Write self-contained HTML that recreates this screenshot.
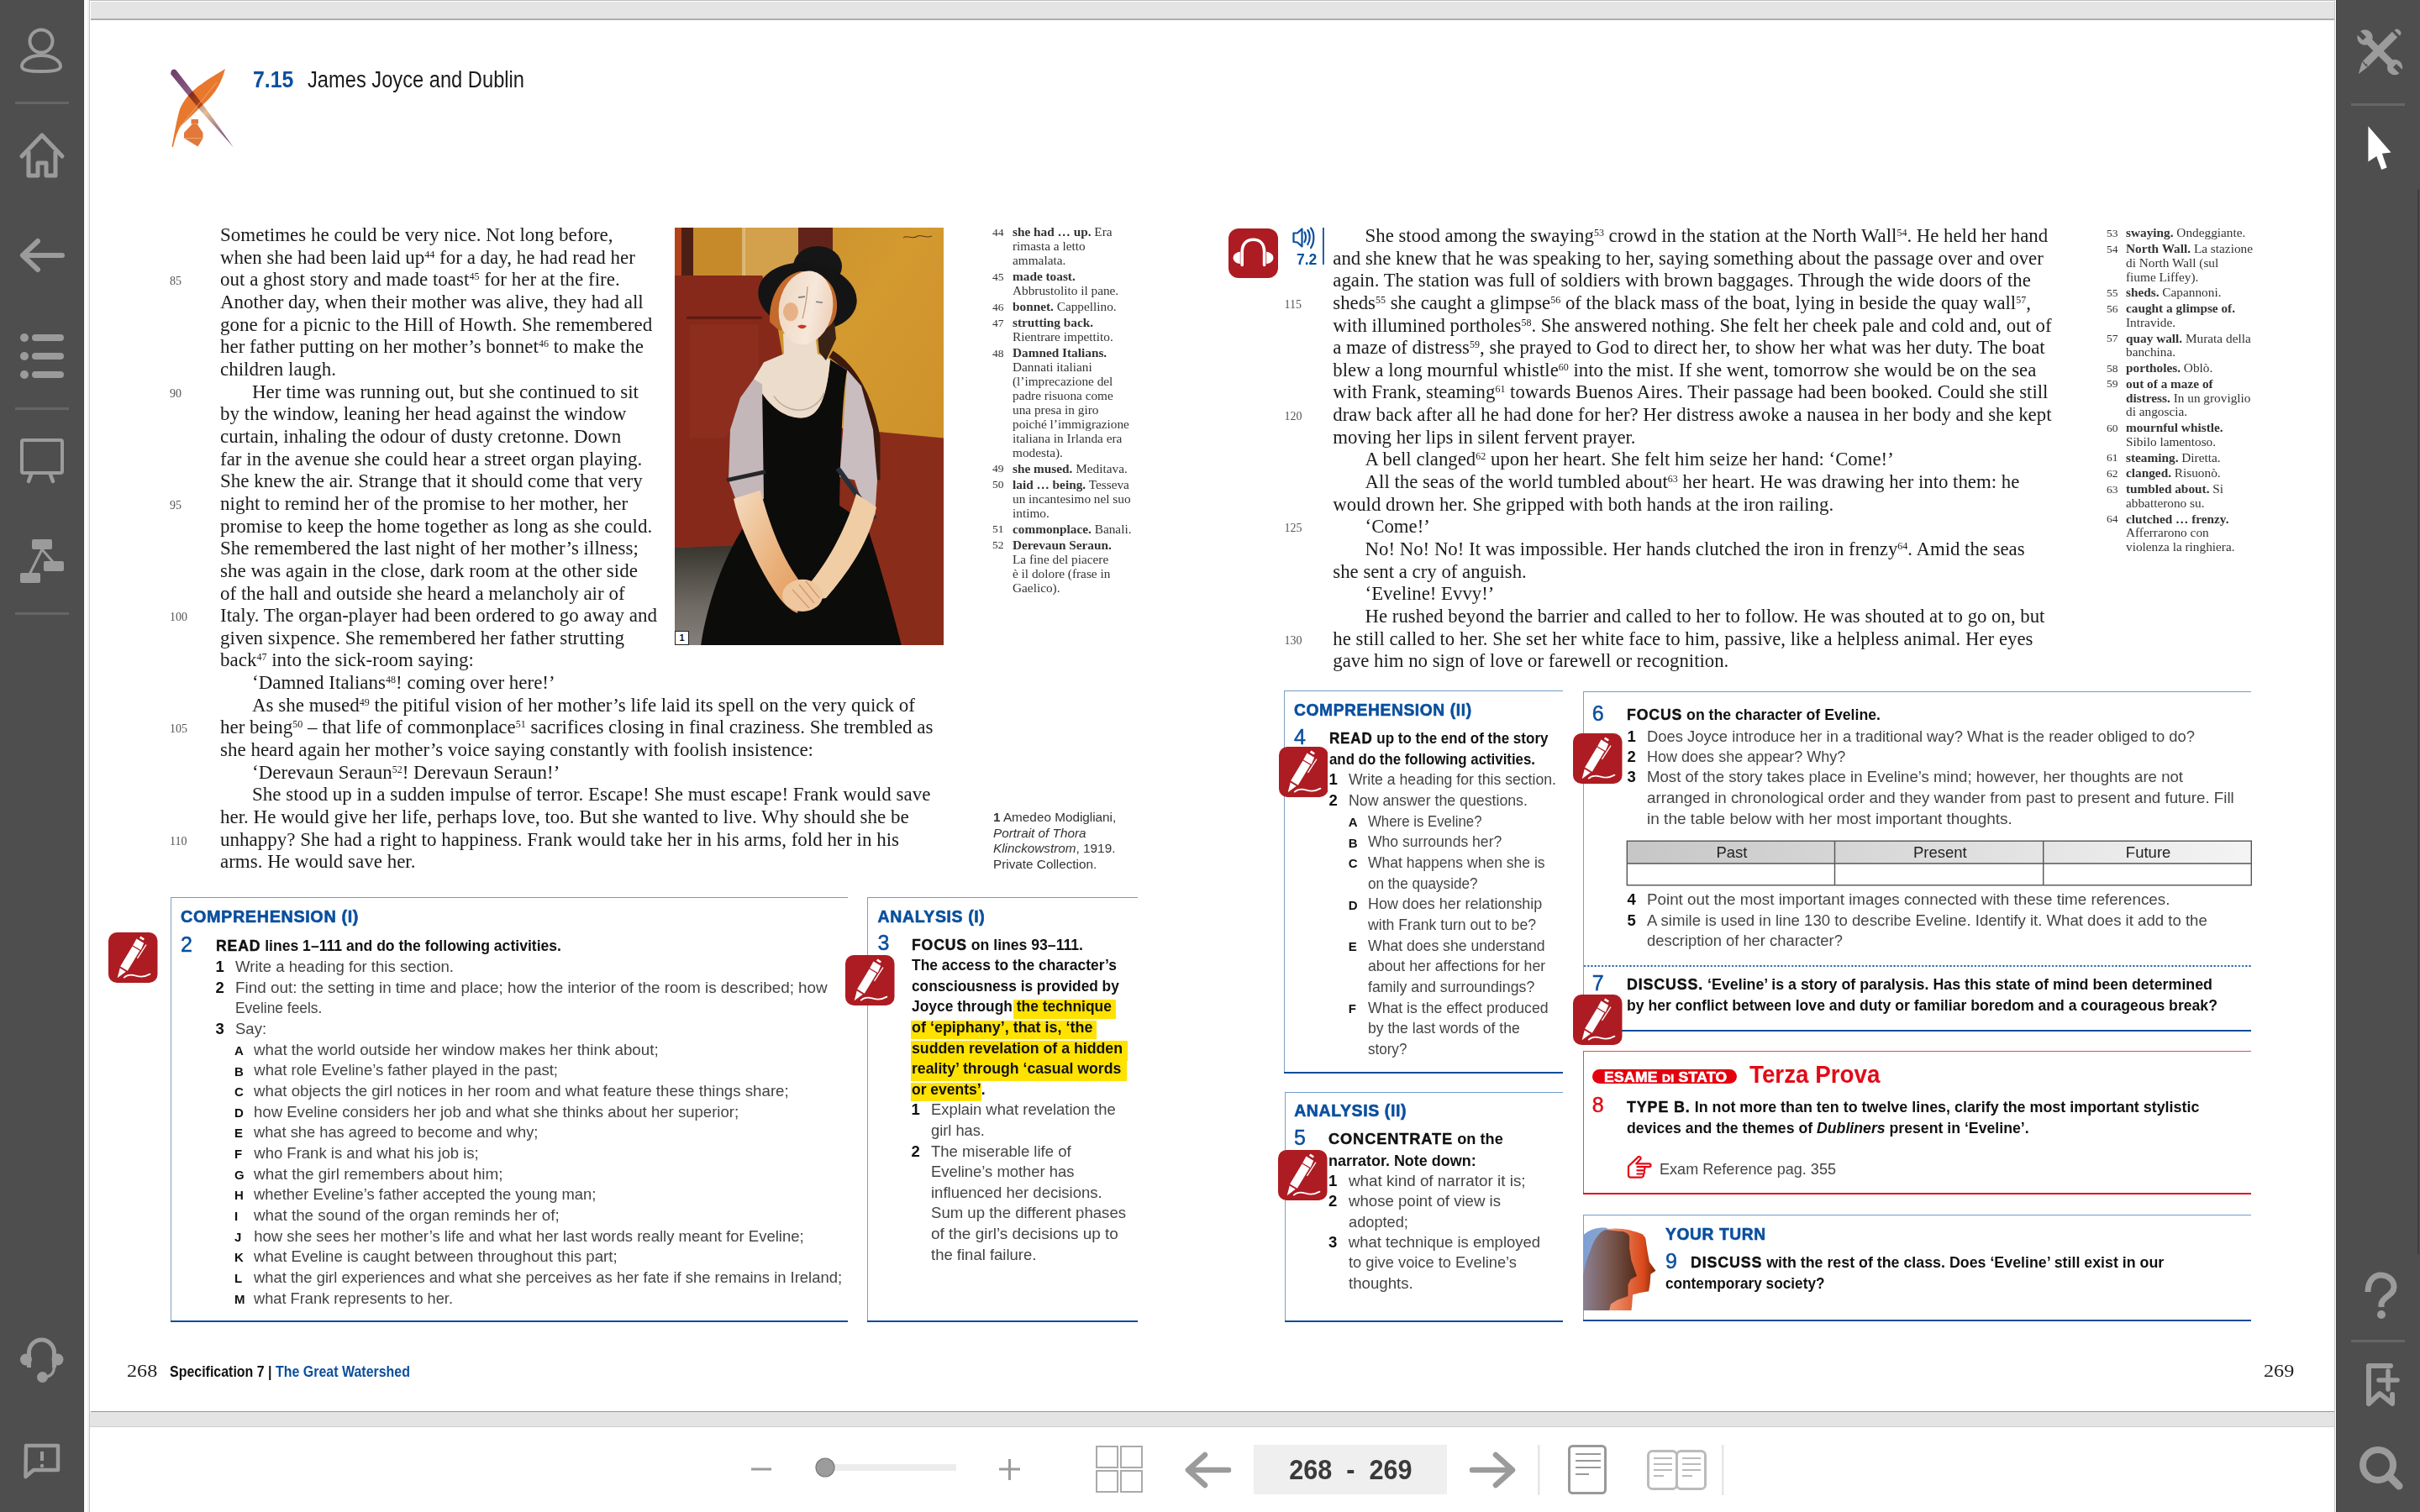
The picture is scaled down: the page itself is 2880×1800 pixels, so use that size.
<!DOCTYPE html>
<html><head><meta charset="utf-8"><title>Eveline</title><style>
*{margin:0;padding:0}
html,body{width:2880px;height:1800px;overflow:hidden;background:#fff}
.t{position:absolute;white-space:pre;line-height:0}
.sp{font-size:12px;position:relative;top:-7px}
.k{font-weight:bold;letter-spacing:0.9px;-webkit-text-stroke:0.45px currentColor}
</style></head><body>
<div style="position:absolute;left:0;top:0;width:100px;height:1800px;background:#4e4e4e"></div>
<div style="position:absolute;left:99px;top:0;width:1px;height:1800px;background:#454545"></div>
<div style="position:absolute;left:100px;top:0;width:6px;height:1800px;background:linear-gradient(90deg,#f3f3f3,#fff 40%,#ececec)"></div>
<div style="position:absolute;left:106px;top:0;width:1px;height:1800px;background:#c6c6c6"></div>
<div style="position:absolute;left:2778px;top:0;width:1px;height:1800px;background:#c8c8c8"></div>
<div style="position:absolute;left:2780px;top:0;width:100px;height:1800px;background:#4e4e4e"></div>
<div style="position:absolute;left:2780px;top:0;width:1px;height:1800px;background:#3e3e3e"></div>
<div style="position:absolute;left:2877px;top:226px;width:2px;height:1267px;background:#3d3d3d"></div>
<div style="position:absolute;left:107px;top:0;width:2671px;height:1px;background:#bfbfbf"></div>
<div style="position:absolute;left:108px;top:2px;width:2670px;height:20.5px;background:#e4e4e4"></div>
<div style="position:absolute;left:108px;top:22px;width:2670px;height:2px;background:linear-gradient(#b5b5b5,#a6a6a6)"></div>
<div style="position:absolute;left:108px;top:1679.5px;width:2670px;height:3px;background:linear-gradient(#8a8a8a,#b0b0b0 60%,#d8d8d8)"></div>
<div style="position:absolute;left:107px;top:1681px;width:2671px;height:17px;background:#e4e4e4"></div>
<div style="position:absolute;left:107px;top:1698px;width:2671px;height:1px;background:#cfcfcf"></div>
<div style="position:absolute;left:18px;top:120.5px;width:64px;height:3px;background:#666"></div>
<div style="position:absolute;left:18px;top:484.5px;width:64px;height:3px;background:#666"></div>
<div style="position:absolute;left:18px;top:728.5px;width:64px;height:3px;background:#666"></div>
<div style="position:absolute;left:2798px;top:122.5px;width:64px;height:3px;background:#666"></div>
<div style="position:absolute;left:2798px;top:1594.5px;width:64px;height:3px;background:#666"></div>
<svg style="position:absolute;left:0;top:0" width="2880" height="1800" viewBox="0 0 2880 1800"><circle cx="49" cy="49" r="13.5" fill="none" stroke="#9b9b9b" stroke-width="4"/><path d="M49 66 C33 66 26 74 26 79 C26 84 36 85 49 85 C62 85 72 84 72 79 C72 74 65 66 49 66 Z" fill="none" stroke="#9b9b9b" stroke-width="4"/><path d="M26 186 L50 161 L74 186" fill="none" stroke="#9b9b9b" stroke-width="5" stroke-linecap="round" stroke-linejoin="round"/><path d="M34 180 V209 H45 V194 H55 V209 H66 V180" fill="none" stroke="#9b9b9b" stroke-width="5" stroke-linejoin="round"/><path d="M74 304 H28 M45 287 L27 304 L45 321" fill="none" stroke="#9b9b9b" stroke-width="6" stroke-linecap="round" stroke-linejoin="round"/><circle cx="29" cy="402" r="5" fill="#9b9b9b"/><rect x="38" y="398" width="38" height="8" rx="4" fill="#9b9b9b"/><circle cx="29" cy="424" r="5" fill="#9b9b9b"/><rect x="38" y="420" width="38" height="8" rx="4" fill="#9b9b9b"/><circle cx="29" cy="446" r="5" fill="#9b9b9b"/><rect x="38" y="442" width="38" height="8" rx="4" fill="#9b9b9b"/><rect x="26" y="524" width="48" height="39" rx="2" fill="none" stroke="#9b9b9b" stroke-width="4"/><path d="M37 565 L34 573 M60 565 L63 573" stroke="#9b9b9b" stroke-width="4.5" stroke-linecap="round"/><rect x="38" y="642" width="24" height="12" rx="2" fill="#9b9b9b"/><rect x="52" y="668" width="24" height="12" rx="2" fill="#9b9b9b"/><rect x="24" y="682" width="24" height="12" rx="2" fill="#9b9b9b"/><path d="M50 654 L35 684 M50 654 L64 670" stroke="#9b9b9b" stroke-width="3"/><path d="M34.5 1628 V1610 A15 15 0 0 1 64.5 1610 V1628" fill="none" stroke="#9b9b9b" stroke-width="5"/><circle cx="31" cy="1618.5" r="7" fill="#9b9b9b"/><circle cx="68.5" cy="1618.5" r="7" fill="#9b9b9b"/><path d="M64.5 1626 C64.5 1636 60 1639 52 1639.5" fill="none" stroke="#9b9b9b" stroke-width="3.5"/><circle cx="50.5" cy="1639.5" r="6.5" fill="#9b9b9b"/><path d="M31 1721 H69 V1750 H40 L30.5 1758 Z" fill="none" stroke="#9b9b9b" stroke-width="4.5" stroke-linejoin="round"/><path d="M50 1728 V1739" stroke="#9b9b9b" stroke-width="4"/><circle cx="50" cy="1745" r="2.2" fill="#9b9b9b"/><path d="M2816 46 L2849 79" stroke="#9b9b9b" stroke-width="8.5"/><circle cx="2814.5" cy="44.5" r="9.2" fill="#9b9b9b"/><circle cx="2850" cy="80" r="9.2" fill="#9b9b9b"/><path d="M2802 38 L2812 48 L2816 44 L2806 34 Z" fill="#4e4e4e"/><path d="M2862 86 L2852 76 L2848 80 L2858 90 Z" fill="#4e4e4e"/><path d="M2815 76 L2850 41" stroke="#9b9b9b" stroke-width="9" stroke-linecap="butt"/><path d="M2849.5 36 L2856 42.5 A4.6 4.6 0 0 0 2849.5 36 Z" fill="#9b9b9b"/><path d="M2850 41.5 L2851 40.5" stroke="#4e4e4e" stroke-width="1"/><path d="M2811 73.5 L2817.5 80 L2806.8 88 Z" fill="#9b9b9b"/><path d="M2812.5 74 L2815.5 78 L2817 76" fill="none" stroke="#4e4e4e" stroke-width="1.2"/><path d="M2818.4 150.3 L2845.5 181.4 L2834.9 182.7 L2840.6 199.4 L2834.2 202 L2828.3 186 L2818.4 192.5 Z" fill="#fff"/><path d="M2818 1538 C2818 1524 2826 1518 2833 1518 C2842 1518 2849 1524 2849 1532 C2849 1542 2836 1543 2834 1552 V1556" fill="none" stroke="#9b9b9b" stroke-width="7"/><circle cx="2834" cy="1565" r="5" fill="#9b9b9b"/><path d="M2819 1671 V1626 H2845 M2819 1671 L2832 1659 L2847 1671 V1660" fill="none" stroke="#9b9b9b" stroke-width="6" stroke-linejoin="round" stroke-linecap="round"/><path d="M2842 1632 V1654 M2831 1643 H2853" stroke="#9b9b9b" stroke-width="5.5" stroke-linecap="round"/><circle cx="2830" cy="1744" r="18" fill="none" stroke="#9b9b9b" stroke-width="8"/><path d="M2843 1757 L2855 1769" stroke="#9b9b9b" stroke-width="9" stroke-linecap="round"/><path d="M894 1749 H918" stroke="#9b9b9b" stroke-width="3"/><rect x="982" y="1743" width="156" height="8" fill="#ececec"/><circle cx="982" cy="1747" r="11" fill="#9c9c9c" stroke="#7a7a7a" stroke-width="1.2"/><path d="M1189 1749 H1214 M1201.5 1737 V1762" stroke="#9b9b9b" stroke-width="3"/><rect x="1305" y="1722" width="25" height="25" fill="none" stroke="#aaa" stroke-width="2"/><rect x="1334" y="1722" width="25" height="25" fill="none" stroke="#aaa" stroke-width="2"/><rect x="1305" y="1751" width="25" height="25" fill="none" stroke="#aaa" stroke-width="2"/><rect x="1334" y="1751" width="25" height="25" fill="none" stroke="#aaa" stroke-width="2"/><path d="M1462 1750 H1416 M1434 1732 L1414 1750 L1434 1768" fill="none" stroke="#9b9b9b" stroke-width="6.5" stroke-linecap="round" stroke-linejoin="round"/><rect x="1492" y="1720" width="230" height="59" fill="#efefef"/><path d="M1752 1750 H1798 M1780 1732 L1800 1750 L1780 1768" fill="none" stroke="#9b9b9b" stroke-width="6.5" stroke-linecap="round" stroke-linejoin="round"/><rect x="1830" y="1720" width="2.5" height="60" fill="#e6e6e6"/><rect x="2049" y="1720" width="2.5" height="60" fill="#e6e6e6"/><rect x="1867.5" y="1721.5" width="43" height="56" rx="4" fill="none" stroke="#999" stroke-width="3"/><rect x="1875" y="1730" width="30" height="2" fill="#999"/><rect x="1875" y="1738" width="30" height="2" fill="#999"/><rect x="1875" y="1746" width="30" height="2" fill="#999"/><rect x="1875" y="1754" width="16" height="2" fill="#999"/><rect x="1961.5" y="1727.5" width="34" height="45" rx="5" fill="none" stroke="#bbb" stroke-width="3"/><rect x="1995.5" y="1727.5" width="34" height="45" rx="5" fill="none" stroke="#bbb" stroke-width="3"/><rect x="1968" y="1735" width="22" height="2" fill="#bbb"/><rect x="2002" y="1735" width="22" height="2" fill="#bbb"/><rect x="1968" y="1742" width="22" height="2" fill="#bbb"/><rect x="2002" y="1742" width="22" height="2" fill="#bbb"/><rect x="1968" y="1749" width="22" height="2" fill="#bbb"/><rect x="2002" y="1749" width="22" height="2" fill="#bbb"/><rect x="1968" y="1756" width="12" height="2" fill="#bbb"/><rect x="2002" y="1756" width="12" height="2" fill="#bbb"/></svg>
<div style="position:absolute;left:1492px;top:1720px;width:230px;height:59px;line-height:59px;text-align:center;font-family:'Liberation Sans',sans-serif;font-weight:bold;font-size:34px;color:#3a3a3a;white-space:pre"><span style="display:inline-block;transform:scaleX(0.9)">268  -  269</span></div>
<svg style="position:absolute;left:195px;top:75px" width="90" height="110" viewBox="195 75 90 110"><defs><linearGradient id="pur" gradientUnits="userSpaceOnUse" x1="205" y1="84" x2="277" y2="175"><stop offset="0" stop-color="#6e3f6c"/><stop offset="0.3" stop-color="#8a5a84"/><stop offset="0.55" stop-color="#e3c095"/><stop offset="0.8" stop-color="#9a6a88"/><stop offset="1" stop-color="#6e3f6c"/></linearGradient></defs><path d="M203.4 88.5 C202.5 84 206 81 209.6 83.5 L244.5 128.4 L277.6 175 L239.3 132.4 Z" fill="url(#pur)"/><path d="M268 82 C262 86 250 92 240 100 C228 108 219 118 214 130 C211 140 208 156 204.5 175 L206 175 C209 162 212 155 215 150 C224 142 232 134 240 126 C252 116 262 104 268 82 Z" fill="#e8782e" style="mix-blend-mode:multiply"/><path d="M258 98 L215 150" stroke="#f6b080" stroke-width="0.8"/><path d="M227.5 142 H236 V147.5 H227.5 Z" fill="#e2783a"/><path d="M229 147.5 H234.5 L241.5 158 V164.5 L235.5 174.5 L219 164.5 V158 Z" fill="#e2783a"/><path d="M219 164.5 L241.5 164.5" stroke="#f3b080" stroke-width="0.8"/></svg>
<svg style="position:absolute;left:803px;top:271px" width="320" height="497" viewBox="0 0 320 496" preserveAspectRatio="none"><defs><linearGradient id="och" x1="0" y1="0" x2="1" y2="1"><stop offset="0" stop-color="#c4862a"/><stop offset="0.45" stop-color="#d39a30"/><stop offset="1" stop-color="#c98a26"/></linearGradient><linearGradient id="chair" x1="0" y1="0" x2="0" y2="1"><stop offset="0" stop-color="#38352f"/><stop offset="0.6" stop-color="#6f6a64"/><stop offset="1" stop-color="#85807a"/></linearGradient><linearGradient id="arm" x1="0" y1="0" x2="1" y2="1"><stop offset="0" stop-color="#f4dcc0"/><stop offset="0.6" stop-color="#eab07a"/><stop offset="1" stop-color="#e29a5c"/></linearGradient><linearGradient id="face" x1="0" y1="0" x2="1" y2="0"><stop offset="0" stop-color="#efd8c4"/><stop offset="0.6" stop-color="#f6e8da"/><stop offset="1" stop-color="#eed2bc"/></linearGradient></defs><rect width="320" height="496" fill="url(#och)"/><rect x="0" y="0" width="8" height="496" fill="#b2421c"/><rect x="8" y="0" width="14" height="60" fill="#4c1f14"/><rect x="22" y="0" width="125" height="57" fill="#c68a2a"/><rect x="83" y="0" width="64" height="57" fill="#d3a04c"/><rect x="80" y="0" width="4" height="57" fill="#e6c890" opacity="0.7"/><rect x="147" y="0" width="41" height="52" fill="#62241a"/><path d="M8 57 L104 57 L112 75 L121 110 L128 150 L120 180 L112 260 L100 380 L0 380 L0 57 Z" fill="#86291b"/><path d="M14 107 L104 107" stroke="#5e1a12" stroke-width="3"/><path d="M18 115 L100 115 L100 200 L60 250 L18 250 Z" fill="#93321f" opacity="0.5"/><path d="M196 238 L320 250 L320 496 L196 496 Z" fill="#8a2c1a"/><path d="M0 380 L76 378 L52 440 L40 497 L0 497 Z" fill="url(#chair)"/><path d="M186 150 C210 165 232 200 240 250 L240 300" fill="none" stroke="#3d1a0e" stroke-width="9"/><path d="M94 180 C110 212 130 226 150 226 C168 226 180 212 185 157 L205 169 C200 200 198 240 196 330 L228 352 C244 400 258 450 270 497 L31 497 C38 450 55 400 78 362 L100 330 C104 290 102 240 94 180 Z" fill="#0c0c0b"/><path d="M129 126 L167 126 L170 150 L185 157 C180 212 168 226 150 226 C130 226 110 212 94 180 L106 160 L130 150 Z" fill="#ecdccc"/><path d="M118 200 C132 222 166 224 178 196" fill="none" stroke="#bfae9e" stroke-width="1.5"/><path d="M94 180 L104 186 L106 322 L76 332 L64 300 L66 240 L78 202 Z" fill="#c4b7ba"/><path d="M62 300 L108 290" stroke="#26262a" stroke-width="5"/><path d="M185 157 L206 170 L222 188 L236 240 L241 300 L238 346 L228 342 L214 300 L196 296 L200 244 L205 169 Z" fill="#c9bdc0"/><path d="M194 286 L238 346" stroke="#263038" stroke-width="6"/><path d="M70 322 L102 312 C112 350 128 395 152 424 L146 458 C130 452 116 430 100 400 C88 375 76 350 70 322 Z" fill="url(#arm)"/><path d="M216 316 L240 332 C232 372 208 408 180 440 L150 444 L158 426 C182 398 204 358 216 316 Z" fill="#f0cda4"/><ellipse cx="152" cy="437" rx="24" ry="19" fill="#efc79e"/><path d="M140 430 L160 452 M148 424 L166 446 M156 420 L172 440" stroke="#d0906a" stroke-width="1.2"/><ellipse cx="170" cy="46" rx="29" ry="24" fill="#161616"/><ellipse cx="158" cy="82" rx="59" ry="40" transform="rotate(8 158 82)" fill="#141414"/><path d="M113 112 C112 80 128 56 150 52 C172 50 192 64 193 90 C194 108 186 118 176 122 L124 122 Z" fill="#c36a2c"/><path d="M170 128 L190 112 L192 132 L180 158 L172 148 Z" fill="#3a2216"/><ellipse cx="156" cy="95" rx="32" ry="44" transform="rotate(10 156 95)" fill="url(#face)"/><ellipse cx="138" cy="100" rx="9" ry="11" fill="#e0925a" opacity="0.6"/><path d="M147 83 L155 82 M168 88 L176 89" stroke="#7a7a80" stroke-width="1.6"/><path d="M158 70 C157 90 154 100 152 108" fill="none" stroke="#c89a80" stroke-width="1.3"/><path d="M146 117 C149 115 154 115 157 117 C154 121 149 121 146 117 Z" fill="#c8382a"/><path d="M272 12 C277 8 282 15 289 10 C294 8 298 13 306 10" stroke="#5a3a18" stroke-width="1" fill="none"/></svg><div style="position:absolute;left:803px;top:751px;width:15px;height:15px;border:1px solid #222;background:#fff;font-family:'Liberation Sans',sans-serif;font-weight:bold;font-size:11px;line-height:15px;text-align:center;color:#111">1</div>
<div style="position:absolute;left:202.6px;top:1068px;width:806.1999999999999px;height:1px;background:#6f9cc8;"></div>
<div style="position:absolute;left:202.6px;top:1068px;width:1px;height:504.5999999999999px;background:#7f9fbf;"></div>
<div style="position:absolute;left:202.6px;top:1571.6px;width:806.1999999999999px;height:2px;background:#0b4c99;"></div>
<div style="position:absolute;left:1032px;top:1068px;width:321.5999999999999px;height:1px;background:#6f9cc8;"></div>
<div style="position:absolute;left:1032px;top:1068px;width:1px;height:504.5999999999999px;background:#7f9fbf;"></div>
<div style="position:absolute;left:1032px;top:1571.6px;width:321.5999999999999px;height:2px;background:#0b4c99;"></div>
<div style="position:absolute;left:1528.4px;top:822px;width:331.29999999999995px;height:1px;background:#6f9cc8;"></div>
<div style="position:absolute;left:1528.4px;top:822px;width:1px;height:454.70000000000005px;background:#7f9fbf;"></div>
<div style="position:absolute;left:1528.4px;top:1275.7px;width:331.29999999999995px;height:2px;background:#0b4c99;"></div>
<div style="position:absolute;left:1528.6px;top:1300px;width:331.20000000000005px;height:1px;background:#6f9cc8;"></div>
<div style="position:absolute;left:1528.6px;top:1300px;width:1px;height:272.70000000000005px;background:#7f9fbf;"></div>
<div style="position:absolute;left:1528.6px;top:1571.7px;width:331.20000000000005px;height:2px;background:#0b4c99;"></div>
<div style="position:absolute;left:1883.6px;top:822.6px;width:795.4000000000001px;height:1px;background:#6f9cc8;"></div>
<div style="position:absolute;left:1883.6px;top:822.6px;width:1px;height:403.9999999999999px;background:#7f9fbf;"></div>
<div style="position:absolute;left:1929px;top:1225.6px;width:750px;height:2px;background:#0b4c99;"></div>
<div style="position:absolute;left:1884px;top:1149px;width:795px;height:2px;background-image:radial-gradient(circle,#0a4f9e 0.9px,transparent 1.1px);background-size:4.2px 2px"></div>
<div style="position:absolute;left:1883.6px;top:1251px;width:795.4px;height:1px;background:#ea4850;"></div>
<div style="position:absolute;left:1883.6px;top:1251px;width:1px;height:170.3px;background:#ea4850;"></div>
<div style="position:absolute;left:1883.6px;top:1420.3px;width:795.4px;height:2px;background:#e20a17;"></div>
<div style="position:absolute;left:1883.6px;top:1446px;width:795.4px;height:1px;background:#6f9cc8;"></div>
<div style="position:absolute;left:1883.6px;top:1446px;width:1px;height:126.3px;background:#7f9fbf;"></div>
<div style="position:absolute;left:1883.6px;top:1571.3px;width:795.4px;height:2px;background:#0b4c99;"></div>
<div style="position:absolute;left:1935.7px;top:1000.6px;width:744.2px;height:27.4px;background:linear-gradient(90deg,#c6c6c6,#dcdddc 50%,#f4f4f4)"></div>
<svg style="position:absolute;left:0;top:0" width="2880" height="1800" viewBox="0 0 2880 1800"><rect x="1936.3" y="1001.2" width="743" height="52.6" fill="none" stroke="#555" stroke-width="1.4"/><path d="M1936 1028 H2679.6 M2183.5 1001 V1054 M2431.7 1001 V1054" stroke="#555" stroke-width="1.4"/></svg>
<div style="position:absolute;left:1206.4px;top:1190.4px;width:121.5px;height:22.5px;background:#ffe200;"></div>
<div style="position:absolute;left:1084.3px;top:1214.6px;width:221.10000000000014px;height:22.90000000000009px;background:#ffe200;"></div>
<div style="position:absolute;left:1084.3px;top:1239px;width:257.5px;height:23.5px;background:#ffe200;"></div>
<div style="position:absolute;left:1084.3px;top:1263px;width:256.70000000000005px;height:23.799999999999955px;background:#ffe200;"></div>
<div style="position:absolute;left:1084.3px;top:1288.6px;width:83.60000000000014px;height:22.40000000000009px;background:#ffe200;"></div>
<div style="position:absolute;left:1895px;top:1272.5px;width:171.5px;height:17.5px;border-radius:9px;background:#e3000f"></div>
<svg style="position:absolute;left:1462px;top:272px" width="59" height="59" viewBox="0 0 59 59"><rect width="59" height="59" rx="12" fill="#ad1c22"/><path d="M16.2 43.5 V28 C16.2 18 22 13.2 29.5 13.2 C37 13.2 42.6 18 42.6 28 V43.5" fill="none" stroke="#fff" stroke-width="3.6" stroke-linecap="round"/><path d="M13.8 27.8 C8.5 28.5 5.6 31.5 5.6 35 C5.6 38.5 8.5 41.4 13.8 42 Z" fill="#fff"/><path d="M45.2 27.8 C50.5 28.5 53.4 31.5 53.4 35 C53.4 38.5 50.5 41.4 45.2 42 Z" fill="#fff"/></svg>
<svg style="position:absolute;left:1536px;top:269px" width="40" height="48" viewBox="1536 269 40 48"><path d="M1539.5 288 V277.5 H1544 L1549.5 272.5 V293.5 L1544 288.5 Z" fill="none" stroke="#0a4f9e" stroke-width="2.2" stroke-linejoin="round"/><path d="M1552.5 276.5 C1554.5 279 1554.5 285 1552.5 288" fill="none" stroke="#0a4f9e" stroke-width="2.2" stroke-linecap="round"/><path d="M1556.3 274 C1559.5 278 1559.5 286 1556.3 291" fill="none" stroke="#0a4f9e" stroke-width="2.2" stroke-linecap="round"/><path d="M1560 271.5 C1564.5 277 1564.5 288 1560 295" fill="none" stroke="#0a4f9e" stroke-width="2.2" stroke-linecap="round"/><rect x="1574" y="271" width="1.8" height="44" fill="#0a4f9e"/></svg>
<div style="position:absolute;left:1908.6px;top:1272.5px;height:17.5px;line-height:18.5px;font-family:'Liberation Sans',sans-serif;font-weight:bold;color:#fff;white-space:pre;font-size:16.5px;-webkit-text-stroke:0.6px #fff;letter-spacing:0.3px;transform-origin:0 0;transform:scaleX(1.06)">ESAME <span style="font-size:13px">DI</span> STATO</div>
<svg style="position:absolute;left:0;top:0" width="2880" height="1800" viewBox="0 0 2880 1800"><path d="M1938 1399 V1388.5 L1949.2 1377.6 C1950.8 1376.2 1953.2 1377.2 1952.6 1379.4 L1947.3 1385.4 H1962.3 C1965.3 1385.4 1965.3 1389.1 1962.3 1389.1 H1948.4" fill="none" stroke="#e20a17" stroke-width="2.2" stroke-linejoin="round" stroke-linecap="round"/><path d="M1956.7 1389.1 C1957.7 1390.3 1957.6 1392.6 1956.4 1393.3 H1948.4 M1956.4 1393.3 C1957.4 1394.6 1957.2 1396.8 1955.8 1397.5 H1948.4 M1955.8 1397.5 C1956.6 1399.2 1955.6 1401.6 1953 1401.6 H1940.6 C1939 1401.6 1938 1400.6 1938 1399" fill="none" stroke="#e20a17" stroke-width="2.2" stroke-linejoin="round" stroke-linecap="round"/></svg>
<svg style="position:absolute;left:1883.6px;top:1458px" width="90" height="104" viewBox="0 0 90 104"><defs><linearGradient id="hb" x1="0" y1="0" x2="1" y2="0"><stop offset="0" stop-color="#7c9fd4"/><stop offset="1" stop-color="#8aa6d0"/></linearGradient><linearGradient id="hm" x1="0" y1="0" x2="1" y2="0"><stop offset="0" stop-color="#8a8194"/><stop offset="0.5" stop-color="#7a5850"/><stop offset="1" stop-color="#552a18"/></linearGradient><linearGradient id="ho" x1="0" y1="0" x2="1" y2="0"><stop offset="0" stop-color="#f09a78"/><stop offset="0.75" stop-color="#d8481a"/><stop offset="1" stop-color="#7a2808"/></linearGradient></defs><path d="M0 12.6 C8 5 18 3 26.6 3.5 L30 5 L16 30 L0 102 Z" fill="url(#hb)"/><path d="M29.7 5.1 C45 3 60 7 71 11.4 L74.2 15.8 L76.6 31.7 L79 44.4 L86.5 54.7 L80.5 58.7 L80.2 62 L79.7 69.8 L78.1 79.3 L67.8 80.9 L59.1 83.3 L58.3 94.4 L57.5 102 L31.3 102 Z" fill="url(#ho)"/><path d="M0 102 L0 60 C3 45 6 36 8.3 31.7 C11 24 13 19 16.2 15 C20 9 24 6.5 28.1 5.9 C35 7 42 7.5 47.2 7.9 C51 9 54 11 55.1 13.4 L55.1 27.7 L57.5 42.8 L63.9 61 L56.7 65 L53.5 71.4 L53.5 84.9 L40.8 89.6 L32.9 94.4 L31.3 102 Z" fill="url(#hm)"/></svg>
<div class="t" style="left:301.0px;top:95.44px;font-family:'Liberation Sans',sans-serif;font-size:27px;color:#0a4f9e;font-weight:bold;transform-origin:0 0;transform:scaleX(0.9200);">7.15</div>
<div class="t" style="left:366.0px;top:95.44px;font-family:'Liberation Sans',sans-serif;font-size:27px;color:#1a1a1a;transform-origin:0 0;transform:scaleX(0.8771);">James Joyce and Dublin</div>
<div class="t" style="left:262.0px;top:280.14px;font-family:'Liberation Serif',serif;font-size:23px;color:#1c1c1c;">Sometimes he could be very nice. Not long before,</div>
<div class="t" style="left:262.0px;top:306.79px;font-family:'Liberation Serif',serif;font-size:23px;color:#1c1c1c;">when she had been laid up<span class="sp">44</span> for a day, he had read her</div>
<div class="t" style="left:262.0px;top:333.44px;font-family:'Liberation Serif',serif;font-size:23px;color:#1c1c1c;">out a ghost story and made toast<span class="sp">45</span> for her at the fire.</div>
<div class="t" style="left:262.0px;top:360.09px;font-family:'Liberation Serif',serif;font-size:23px;color:#1c1c1c;">Another day, when their mother was alive, they had all</div>
<div class="t" style="left:262.0px;top:386.74px;font-family:'Liberation Serif',serif;font-size:23px;color:#1c1c1c;">gone for a picnic to the Hill of Howth. She remembered</div>
<div class="t" style="left:262.0px;top:413.39px;font-family:'Liberation Serif',serif;font-size:23px;color:#1c1c1c;">her father putting on her mother’s bonnet<span class="sp">46</span> to make the</div>
<div class="t" style="left:262.0px;top:440.04px;font-family:'Liberation Serif',serif;font-size:23px;color:#1c1c1c;">children laugh.</div>
<div class="t" style="left:300.0px;top:466.69px;font-family:'Liberation Serif',serif;font-size:23px;color:#1c1c1c;">Her time was running out, but she continued to sit</div>
<div class="t" style="left:262.0px;top:493.34px;font-family:'Liberation Serif',serif;font-size:23px;color:#1c1c1c;">by the window, leaning her head against the window</div>
<div class="t" style="left:262.0px;top:519.99px;font-family:'Liberation Serif',serif;font-size:23px;color:#1c1c1c;">curtain, inhaling the odour of dusty cretonne. Down</div>
<div class="t" style="left:262.0px;top:546.64px;font-family:'Liberation Serif',serif;font-size:23px;color:#1c1c1c;">far in the avenue she could hear a street organ playing.</div>
<div class="t" style="left:262.0px;top:573.29px;font-family:'Liberation Serif',serif;font-size:23px;color:#1c1c1c;">She knew the air. Strange that it should come that very</div>
<div class="t" style="left:262.0px;top:599.94px;font-family:'Liberation Serif',serif;font-size:23px;color:#1c1c1c;">night to remind her of the promise to her mother, her</div>
<div class="t" style="left:262.0px;top:626.59px;font-family:'Liberation Serif',serif;font-size:23px;color:#1c1c1c;">promise to keep the home together as long as she could.</div>
<div class="t" style="left:262.0px;top:653.24px;font-family:'Liberation Serif',serif;font-size:23px;color:#1c1c1c;">She remembered the last night of her mother’s illness;</div>
<div class="t" style="left:262.0px;top:679.89px;font-family:'Liberation Serif',serif;font-size:23px;color:#1c1c1c;">she was again in the close, dark room at the other side</div>
<div class="t" style="left:262.0px;top:706.54px;font-family:'Liberation Serif',serif;font-size:23px;color:#1c1c1c;">of the hall and outside she heard a melancholy air of</div>
<div class="t" style="left:262.0px;top:733.19px;font-family:'Liberation Serif',serif;font-size:23px;color:#1c1c1c;">Italy. The organ-player had been ordered to go away and</div>
<div class="t" style="left:262.0px;top:759.84px;font-family:'Liberation Serif',serif;font-size:23px;color:#1c1c1c;">given sixpence. She remembered her father strutting</div>
<div class="t" style="left:262.0px;top:786.49px;font-family:'Liberation Serif',serif;font-size:23px;color:#1c1c1c;">back<span class="sp">47</span> into the sick-room saying:</div>
<div class="t" style="left:300.0px;top:813.14px;font-family:'Liberation Serif',serif;font-size:23px;color:#1c1c1c;">‘Damned Italians<span class="sp">48</span>! coming over here!’</div>
<div class="t" style="left:300.0px;top:839.79px;font-family:'Liberation Serif',serif;font-size:23px;color:#1c1c1c;">As she mused<span class="sp">49</span> the pitiful vision of her mother’s life laid its spell on the very quick of</div>
<div class="t" style="left:262.0px;top:866.44px;font-family:'Liberation Serif',serif;font-size:23px;color:#1c1c1c;">her being<span class="sp">50</span> – that life of commonplace<span class="sp">51</span> sacrifices closing in final craziness. She trembled as</div>
<div class="t" style="left:262.0px;top:893.09px;font-family:'Liberation Serif',serif;font-size:23px;color:#1c1c1c;">she heard again her mother’s voice saying constantly with foolish insistence:</div>
<div class="t" style="left:300.0px;top:919.74px;font-family:'Liberation Serif',serif;font-size:23px;color:#1c1c1c;">‘Derevaun Seraun<span class="sp">52</span>! Derevaun Seraun!’</div>
<div class="t" style="left:300.0px;top:946.39px;font-family:'Liberation Serif',serif;font-size:23px;color:#1c1c1c;">She stood up in a sudden impulse of terror. Escape! She must escape! Frank would save</div>
<div class="t" style="left:262.0px;top:973.04px;font-family:'Liberation Serif',serif;font-size:23px;color:#1c1c1c;">her. He would give her life, perhaps love, too. But she wanted to live. Why should she be</div>
<div class="t" style="left:262.0px;top:999.69px;font-family:'Liberation Serif',serif;font-size:23px;color:#1c1c1c;">unhappy? She had a right to happiness. Frank would take her in his arms, fold her in his</div>
<div class="t" style="left:262.0px;top:1026.34px;font-family:'Liberation Serif',serif;font-size:23px;color:#1c1c1c;">arms. He would save her.</div>
<div class="t" style="left:202.0px;top:335.47px;font-family:'Liberation Serif',serif;font-size:14px;color:#555;">85</div>
<div class="t" style="left:202.0px;top:468.72px;font-family:'Liberation Serif',serif;font-size:14px;color:#555;">90</div>
<div class="t" style="left:202.0px;top:601.97px;font-family:'Liberation Serif',serif;font-size:14px;color:#555;">95</div>
<div class="t" style="left:202.0px;top:735.22px;font-family:'Liberation Serif',serif;font-size:14px;color:#555;">100</div>
<div class="t" style="left:202.0px;top:868.47px;font-family:'Liberation Serif',serif;font-size:14px;color:#555;">105</div>
<div class="t" style="left:202.0px;top:1001.72px;font-family:'Liberation Serif',serif;font-size:14px;color:#555;">110</div>
<div class="t" style="left:1181.0px;top:276.94px;font-family:'Liberation Serif',serif;font-size:13.5px;color:#333;">44</div>
<div class="t" style="left:1205.0px;top:276.34px;font-family:'Liberation Serif',serif;font-size:15.3px;color:#333;"><b>she had … up.</b> Era</div>
<div class="t" style="left:1205.0px;top:293.34px;font-family:'Liberation Serif',serif;font-size:15.3px;color:#333;">rimasta a letto</div>
<div class="t" style="left:1205.0px;top:310.34px;font-family:'Liberation Serif',serif;font-size:15.3px;color:#333;">ammalata.</div>
<div class="t" style="left:1181.0px;top:329.84px;font-family:'Liberation Serif',serif;font-size:13.5px;color:#333;">45</div>
<div class="t" style="left:1205.0px;top:329.24px;font-family:'Liberation Serif',serif;font-size:15.3px;color:#333;"><b>made toast.</b></div>
<div class="t" style="left:1205.0px;top:346.24px;font-family:'Liberation Serif',serif;font-size:15.3px;color:#333;">Abbrustolito il pane.</div>
<div class="t" style="left:1181.0px;top:365.74px;font-family:'Liberation Serif',serif;font-size:13.5px;color:#333;">46</div>
<div class="t" style="left:1205.0px;top:365.14px;font-family:'Liberation Serif',serif;font-size:15.3px;color:#333;"><b>bonnet.</b> Cappellino.</div>
<div class="t" style="left:1181.0px;top:384.64px;font-family:'Liberation Serif',serif;font-size:13.5px;color:#333;">47</div>
<div class="t" style="left:1205.0px;top:384.04px;font-family:'Liberation Serif',serif;font-size:15.3px;color:#333;"><b>strutting back.</b></div>
<div class="t" style="left:1205.0px;top:401.04px;font-family:'Liberation Serif',serif;font-size:15.3px;color:#333;">Rientrare impettito.</div>
<div class="t" style="left:1181.0px;top:420.54px;font-family:'Liberation Serif',serif;font-size:13.5px;color:#333;">48</div>
<div class="t" style="left:1205.0px;top:419.94px;font-family:'Liberation Serif',serif;font-size:15.3px;color:#333;"><b>Damned Italians.</b></div>
<div class="t" style="left:1205.0px;top:436.94px;font-family:'Liberation Serif',serif;font-size:15.3px;color:#333;">Dannati italiani</div>
<div class="t" style="left:1205.0px;top:453.94px;font-family:'Liberation Serif',serif;font-size:15.3px;color:#333;">(l’imprecazione del</div>
<div class="t" style="left:1205.0px;top:470.94px;font-family:'Liberation Serif',serif;font-size:15.3px;color:#333;">padre risuona come</div>
<div class="t" style="left:1205.0px;top:487.94px;font-family:'Liberation Serif',serif;font-size:15.3px;color:#333;">una presa in giro</div>
<div class="t" style="left:1205.0px;top:504.94px;font-family:'Liberation Serif',serif;font-size:15.3px;color:#333;">poiché l’immigrazione</div>
<div class="t" style="left:1205.0px;top:521.94px;font-family:'Liberation Serif',serif;font-size:15.3px;color:#333;">italiana in Irlanda era</div>
<div class="t" style="left:1205.0px;top:538.94px;font-family:'Liberation Serif',serif;font-size:15.3px;color:#333;">modesta).</div>
<div class="t" style="left:1181.0px;top:558.44px;font-family:'Liberation Serif',serif;font-size:13.5px;color:#333;">49</div>
<div class="t" style="left:1205.0px;top:557.84px;font-family:'Liberation Serif',serif;font-size:15.3px;color:#333;"><b>she mused.</b> Meditava.</div>
<div class="t" style="left:1181.0px;top:577.34px;font-family:'Liberation Serif',serif;font-size:13.5px;color:#333;">50</div>
<div class="t" style="left:1205.0px;top:576.74px;font-family:'Liberation Serif',serif;font-size:15.3px;color:#333;"><b>laid … being.</b> Tesseva</div>
<div class="t" style="left:1205.0px;top:593.74px;font-family:'Liberation Serif',serif;font-size:15.3px;color:#333;">un incantesimo nel suo</div>
<div class="t" style="left:1205.0px;top:610.74px;font-family:'Liberation Serif',serif;font-size:15.3px;color:#333;">intimo.</div>
<div class="t" style="left:1181.0px;top:630.24px;font-family:'Liberation Serif',serif;font-size:13.5px;color:#333;">51</div>
<div class="t" style="left:1205.0px;top:629.64px;font-family:'Liberation Serif',serif;font-size:15.3px;color:#333;"><b>commonplace.</b> Banali.</div>
<div class="t" style="left:1181.0px;top:649.14px;font-family:'Liberation Serif',serif;font-size:13.5px;color:#333;">52</div>
<div class="t" style="left:1205.0px;top:648.54px;font-family:'Liberation Serif',serif;font-size:15.3px;color:#333;"><b>Derevaun Seraun.</b></div>
<div class="t" style="left:1205.0px;top:665.54px;font-family:'Liberation Serif',serif;font-size:15.3px;color:#333;">La fine del piacere</div>
<div class="t" style="left:1205.0px;top:682.54px;font-family:'Liberation Serif',serif;font-size:15.3px;color:#333;">è il dolore (frase in</div>
<div class="t" style="left:1205.0px;top:699.54px;font-family:'Liberation Serif',serif;font-size:15.3px;color:#333;">Gaelico).</div>
<div class="t" style="left:1182.0px;top:973.20px;font-family:'Liberation Sans',sans-serif;font-size:15.3px;color:#333;"><b>1</b> Amedeo Modigliani,</div>
<div class="t" style="left:1182.0px;top:991.80px;font-family:'Liberation Sans',sans-serif;font-size:15.3px;color:#333;"><i>Portrait of Thora</i></div>
<div class="t" style="left:1182.0px;top:1010.40px;font-family:'Liberation Sans',sans-serif;font-size:15.3px;color:#333;"><i>Klinckowstrom</i>, 1919.</div>
<div class="t" style="left:1182.0px;top:1029.00px;font-family:'Liberation Sans',sans-serif;font-size:15.3px;color:#333;">Private Collection.</div>
<div class="t" style="left:1624.6px;top:280.91px;font-family:'Liberation Serif',serif;font-size:22.8px;color:#1c1c1c;">She stood among the swaying<span class="sp">53</span> crowd in the station at the North Wall<span class="sp">54</span>. He held her hand</div>
<div class="t" style="left:1586.3px;top:307.56px;font-family:'Liberation Serif',serif;font-size:22.8px;color:#1c1c1c;">and she knew that he was speaking to her, saying something about the passage over and over</div>
<div class="t" style="left:1586.3px;top:334.21px;font-family:'Liberation Serif',serif;font-size:22.8px;color:#1c1c1c;">again. The station was full of soldiers with brown baggages. Through the wide doors of the</div>
<div class="t" style="left:1586.3px;top:360.86px;font-family:'Liberation Serif',serif;font-size:22.8px;color:#1c1c1c;">sheds<span class="sp">55</span> she caught a glimpse<span class="sp">56</span> of the black mass of the boat, lying in beside the quay wall<span class="sp">57</span>,</div>
<div class="t" style="left:1586.3px;top:387.51px;font-family:'Liberation Serif',serif;font-size:22.8px;color:#1c1c1c;">with illumined portholes<span class="sp">58</span>. She answered nothing. She felt her cheek pale and cold and, out of</div>
<div class="t" style="left:1586.3px;top:414.16px;font-family:'Liberation Serif',serif;font-size:22.8px;color:#1c1c1c;">a maze of distress<span class="sp">59</span>, she prayed to God to direct her, to show her what was her duty. The boat</div>
<div class="t" style="left:1586.3px;top:440.81px;font-family:'Liberation Serif',serif;font-size:22.8px;color:#1c1c1c;">blew a long mournful whistle<span class="sp">60</span> into the mist. If she went, tomorrow she would be on the sea</div>
<div class="t" style="left:1586.3px;top:467.45px;font-family:'Liberation Serif',serif;font-size:22.8px;color:#1c1c1c;">with Frank, steaming<span class="sp">61</span> towards Buenos Aires. Their passage had been booked. Could she still</div>
<div class="t" style="left:1586.3px;top:494.11px;font-family:'Liberation Serif',serif;font-size:22.8px;color:#1c1c1c;">draw back after all he had done for her? Her distress awoke a nausea in her body and she kept</div>
<div class="t" style="left:1586.3px;top:520.75px;font-family:'Liberation Serif',serif;font-size:22.8px;color:#1c1c1c;">moving her lips in silent fervent prayer.</div>
<div class="t" style="left:1624.6px;top:547.40px;font-family:'Liberation Serif',serif;font-size:22.8px;color:#1c1c1c;">A bell clanged<span class="sp">62</span> upon her heart. She felt him seize her hand: ‘Come!’</div>
<div class="t" style="left:1624.6px;top:574.05px;font-family:'Liberation Serif',serif;font-size:22.8px;color:#1c1c1c;">All the seas of the world tumbled about<span class="sp">63</span> her heart. He was drawing her into them: he</div>
<div class="t" style="left:1586.3px;top:600.70px;font-family:'Liberation Serif',serif;font-size:22.8px;color:#1c1c1c;">would drown her. She gripped with both hands at the iron railing.</div>
<div class="t" style="left:1624.6px;top:627.35px;font-family:'Liberation Serif',serif;font-size:22.8px;color:#1c1c1c;">‘Come!’</div>
<div class="t" style="left:1624.6px;top:654.00px;font-family:'Liberation Serif',serif;font-size:22.8px;color:#1c1c1c;">No! No! No! It was impossible. Her hands clutched the iron in frenzy<span class="sp">64</span>. Amid the seas</div>
<div class="t" style="left:1586.3px;top:680.65px;font-family:'Liberation Serif',serif;font-size:22.8px;color:#1c1c1c;">she sent a cry of anguish.</div>
<div class="t" style="left:1624.6px;top:707.30px;font-family:'Liberation Serif',serif;font-size:22.8px;color:#1c1c1c;">‘Eveline! Evvy!’</div>
<div class="t" style="left:1624.6px;top:733.95px;font-family:'Liberation Serif',serif;font-size:22.8px;color:#1c1c1c;">He rushed beyond the barrier and called to her to follow. He was shouted at to go on, but</div>
<div class="t" style="left:1586.3px;top:760.60px;font-family:'Liberation Serif',serif;font-size:22.8px;color:#1c1c1c;">he still called to her. She set her white face to him, passive, like a helpless animal. Her eyes</div>
<div class="t" style="left:1586.3px;top:787.25px;font-family:'Liberation Serif',serif;font-size:22.8px;color:#1c1c1c;">gave him no sign of love or farewell or recognition.</div>
<div class="t" style="left:1528.5px;top:362.82px;font-family:'Liberation Serif',serif;font-size:14px;color:#555;">115</div>
<div class="t" style="left:1528.5px;top:496.07px;font-family:'Liberation Serif',serif;font-size:14px;color:#555;">120</div>
<div class="t" style="left:1528.5px;top:629.32px;font-family:'Liberation Serif',serif;font-size:14px;color:#555;">125</div>
<div class="t" style="left:1528.5px;top:762.57px;font-family:'Liberation Serif',serif;font-size:14px;color:#555;">130</div>
<div class="t" style="left:1543.0px;top:308.54px;font-family:'Liberation Sans',sans-serif;font-size:17.5px;color:#0a4f9e;font-weight:bold;">7.2</div>
<div class="t" style="left:2507.0px;top:277.94px;font-family:'Liberation Serif',serif;font-size:13.5px;color:#333;">53</div>
<div class="t" style="left:2530.0px;top:277.34px;font-family:'Liberation Serif',serif;font-size:15.3px;color:#333;"><b>swaying.</b> Ondeggiante.</div>
<div class="t" style="left:2507.0px;top:296.69px;font-family:'Liberation Serif',serif;font-size:13.5px;color:#333;">54</div>
<div class="t" style="left:2530.0px;top:296.09px;font-family:'Liberation Serif',serif;font-size:15.3px;color:#333;"><b>North Wall.</b> La stazione</div>
<div class="t" style="left:2530.0px;top:312.84px;font-family:'Liberation Serif',serif;font-size:15.3px;color:#333;">di North Wall (sul</div>
<div class="t" style="left:2530.0px;top:329.59px;font-family:'Liberation Serif',serif;font-size:15.3px;color:#333;">fiume Liffey).</div>
<div class="t" style="left:2507.0px;top:348.94px;font-family:'Liberation Serif',serif;font-size:13.5px;color:#333;">55</div>
<div class="t" style="left:2530.0px;top:348.34px;font-family:'Liberation Serif',serif;font-size:15.3px;color:#333;"><b>sheds.</b> Capannoni.</div>
<div class="t" style="left:2507.0px;top:367.69px;font-family:'Liberation Serif',serif;font-size:13.5px;color:#333;">56</div>
<div class="t" style="left:2530.0px;top:367.09px;font-family:'Liberation Serif',serif;font-size:15.3px;color:#333;"><b>caught a glimpse of.</b></div>
<div class="t" style="left:2530.0px;top:383.84px;font-family:'Liberation Serif',serif;font-size:15.3px;color:#333;">Intravide.</div>
<div class="t" style="left:2507.0px;top:403.19px;font-family:'Liberation Serif',serif;font-size:13.5px;color:#333;">57</div>
<div class="t" style="left:2530.0px;top:402.59px;font-family:'Liberation Serif',serif;font-size:15.3px;color:#333;"><b>quay wall.</b> Murata della</div>
<div class="t" style="left:2530.0px;top:419.34px;font-family:'Liberation Serif',serif;font-size:15.3px;color:#333;">banchina.</div>
<div class="t" style="left:2507.0px;top:438.69px;font-family:'Liberation Serif',serif;font-size:13.5px;color:#333;">58</div>
<div class="t" style="left:2530.0px;top:438.09px;font-family:'Liberation Serif',serif;font-size:15.3px;color:#333;"><b>portholes.</b> Oblò.</div>
<div class="t" style="left:2507.0px;top:457.44px;font-family:'Liberation Serif',serif;font-size:13.5px;color:#333;">59</div>
<div class="t" style="left:2530.0px;top:456.84px;font-family:'Liberation Serif',serif;font-size:15.3px;color:#333;"><b>out of a maze of</b></div>
<div class="t" style="left:2530.0px;top:473.59px;font-family:'Liberation Serif',serif;font-size:15.3px;color:#333;"><b>distress.</b> In un groviglio</div>
<div class="t" style="left:2530.0px;top:490.34px;font-family:'Liberation Serif',serif;font-size:15.3px;color:#333;">di angoscia.</div>
<div class="t" style="left:2507.0px;top:509.69px;font-family:'Liberation Serif',serif;font-size:13.5px;color:#333;">60</div>
<div class="t" style="left:2530.0px;top:509.09px;font-family:'Liberation Serif',serif;font-size:15.3px;color:#333;"><b>mournful whistle.</b></div>
<div class="t" style="left:2530.0px;top:525.84px;font-family:'Liberation Serif',serif;font-size:15.3px;color:#333;">Sibilo lamentoso.</div>
<div class="t" style="left:2507.0px;top:545.19px;font-family:'Liberation Serif',serif;font-size:13.5px;color:#333;">61</div>
<div class="t" style="left:2530.0px;top:544.59px;font-family:'Liberation Serif',serif;font-size:15.3px;color:#333;"><b>steaming.</b> Diretta.</div>
<div class="t" style="left:2507.0px;top:563.94px;font-family:'Liberation Serif',serif;font-size:13.5px;color:#333;">62</div>
<div class="t" style="left:2530.0px;top:563.34px;font-family:'Liberation Serif',serif;font-size:15.3px;color:#333;"><b>clanged.</b> Risuonò.</div>
<div class="t" style="left:2507.0px;top:582.69px;font-family:'Liberation Serif',serif;font-size:13.5px;color:#333;">63</div>
<div class="t" style="left:2530.0px;top:582.09px;font-family:'Liberation Serif',serif;font-size:15.3px;color:#333;"><b>tumbled about.</b> Si</div>
<div class="t" style="left:2530.0px;top:598.84px;font-family:'Liberation Serif',serif;font-size:15.3px;color:#333;">abbatterono su.</div>
<div class="t" style="left:2507.0px;top:618.19px;font-family:'Liberation Serif',serif;font-size:13.5px;color:#333;">64</div>
<div class="t" style="left:2530.0px;top:617.59px;font-family:'Liberation Serif',serif;font-size:15.3px;color:#333;"><b>clutched … frenzy.</b></div>
<div class="t" style="left:2530.0px;top:634.34px;font-family:'Liberation Serif',serif;font-size:15.3px;color:#333;">Afferrarono con</div>
<div class="t" style="left:2530.0px;top:651.09px;font-family:'Liberation Serif',serif;font-size:15.3px;color:#333;">violenza la ringhiera.</div>
<div class="t" style="left:150.8px;top:1632.28px;font-family:'Liberation Serif',serif;font-size:22px;color:#222;transform-origin:0 0;transform:scaleX(1.0970);">268</div>
<div class="t" style="left:202.0px;top:1633.12px;font-family:'Liberation Sans',sans-serif;font-size:19px;color:#111;font-weight:bold;transform-origin:0 0;transform:scaleX(0.8402);">Specification 7 | <span style="color:#0a4f9e">The Great Watershed</span></div>
<div class="t" style="left:2694.2px;top:1631.98px;font-family:'Liberation Serif',serif;font-size:22px;color:#222;transform-origin:0 0;transform:scaleX(1.0970);">269</div>
<div class="t" style="left:214.8px;top:1091.24px;font-family:'Liberation Sans',sans-serif;font-size:19.5px;color:#0a4f9e;font-weight:bold;letter-spacing:0.6px;-webkit-text-stroke:0.6px #0a4f9e;transform-origin:0 0;transform:scaleX(1.0169);">COMPREHENSION (I)</div>
<div class="t" style="left:215.0px;top:1123.84px;font-family:'Liberation Sans',sans-serif;font-size:25px;color:#0a4f9e;-webkit-text-stroke:0.5px #0a4f9e;">2</div>
<div class="t" style="left:256.5px;top:1126.09px;font-family:'Liberation Sans',sans-serif;font-size:18.5px;color:#111;font-weight:bold;transform-origin:0 0;transform:scaleX(0.9507);"><span class="k">READ</span> lines 1–111 and do the following activities.</div>
<div class="t" style="left:256.5px;top:1150.99px;font-family:'Liberation Sans',sans-serif;font-size:18.5px;color:#111;font-weight:bold;">1</div>
<div class="t" style="left:280.0px;top:1150.99px;font-family:'Liberation Sans',sans-serif;font-size:18.5px;color:#444;transform-origin:0 0;transform:scaleX(1.0046);">Write a heading for this section.</div>
<div class="t" style="left:256.5px;top:1175.65px;font-family:'Liberation Sans',sans-serif;font-size:18.5px;color:#111;font-weight:bold;">2</div>
<div class="t" style="left:280.0px;top:1175.65px;font-family:'Liberation Sans',sans-serif;font-size:18.5px;color:#444;transform-origin:0 0;transform:scaleX(1.0198);">Find out: the setting in time and place; how the interior of the room is described; how</div>
<div class="t" style="left:280.0px;top:1200.31px;font-family:'Liberation Sans',sans-serif;font-size:18.5px;color:#444;transform-origin:0 0;transform:scaleX(0.9396);">Eveline feels.</div>
<div class="t" style="left:256.5px;top:1224.97px;font-family:'Liberation Sans',sans-serif;font-size:18.5px;color:#111;font-weight:bold;">3</div>
<div class="t" style="left:280.0px;top:1224.97px;font-family:'Liberation Sans',sans-serif;font-size:18.5px;color:#444;">Say:</div>
<div class="t" style="left:279.0px;top:1250.84px;font-family:'Liberation Sans',sans-serif;font-size:15px;color:#111;font-weight:bold;">A</div>
<div class="t" style="left:302.3px;top:1249.63px;font-family:'Liberation Sans',sans-serif;font-size:18.5px;color:#444;transform-origin:0 0;transform:scaleX(1.0137);">what the world outside her window makes her think about;</div>
<div class="t" style="left:279.0px;top:1275.50px;font-family:'Liberation Sans',sans-serif;font-size:15px;color:#111;font-weight:bold;">B</div>
<div class="t" style="left:302.3px;top:1274.29px;font-family:'Liberation Sans',sans-serif;font-size:18.5px;color:#444;">what role Eveline’s father played in the past;</div>
<div class="t" style="left:279.0px;top:1300.16px;font-family:'Liberation Sans',sans-serif;font-size:15px;color:#111;font-weight:bold;">C</div>
<div class="t" style="left:302.3px;top:1298.95px;font-family:'Liberation Sans',sans-serif;font-size:18.5px;color:#444;transform-origin:0 0;transform:scaleX(1.0100);">what objects the girl notices in her room and what feature these things share;</div>
<div class="t" style="left:279.0px;top:1324.82px;font-family:'Liberation Sans',sans-serif;font-size:15px;color:#111;font-weight:bold;">D</div>
<div class="t" style="left:302.3px;top:1323.61px;font-family:'Liberation Sans',sans-serif;font-size:18.5px;color:#444;transform-origin:0 0;transform:scaleX(1.0040);">how Eveline considers her job and what she thinks about her superior;</div>
<div class="t" style="left:279.0px;top:1349.48px;font-family:'Liberation Sans',sans-serif;font-size:15px;color:#111;font-weight:bold;">E</div>
<div class="t" style="left:302.3px;top:1348.27px;font-family:'Liberation Sans',sans-serif;font-size:18.5px;color:#444;transform-origin:0 0;transform:scaleX(0.9881);">what she has agreed to become and why;</div>
<div class="t" style="left:279.0px;top:1374.14px;font-family:'Liberation Sans',sans-serif;font-size:15px;color:#111;font-weight:bold;">F</div>
<div class="t" style="left:302.3px;top:1372.93px;font-family:'Liberation Sans',sans-serif;font-size:18.5px;color:#444;">who Frank is and what his job is;</div>
<div class="t" style="left:279.0px;top:1398.80px;font-family:'Liberation Sans',sans-serif;font-size:15px;color:#111;font-weight:bold;">G</div>
<div class="t" style="left:302.3px;top:1397.59px;font-family:'Liberation Sans',sans-serif;font-size:18.5px;color:#444;transform-origin:0 0;transform:scaleX(1.0222);">what the girl remembers about him;</div>
<div class="t" style="left:279.0px;top:1423.46px;font-family:'Liberation Sans',sans-serif;font-size:15px;color:#111;font-weight:bold;">H</div>
<div class="t" style="left:302.3px;top:1422.25px;font-family:'Liberation Sans',sans-serif;font-size:18.5px;color:#444;transform-origin:0 0;transform:scaleX(0.9937);">whether Eveline’s father accepted the young man;</div>
<div class="t" style="left:279.0px;top:1448.12px;font-family:'Liberation Sans',sans-serif;font-size:15px;color:#111;font-weight:bold;">I</div>
<div class="t" style="left:302.3px;top:1446.91px;font-family:'Liberation Sans',sans-serif;font-size:18.5px;color:#444;transform-origin:0 0;transform:scaleX(1.0160);">what the sound of the organ reminds her of;</div>
<div class="t" style="left:279.0px;top:1472.78px;font-family:'Liberation Sans',sans-serif;font-size:15px;color:#111;font-weight:bold;">J</div>
<div class="t" style="left:302.3px;top:1471.57px;font-family:'Liberation Sans',sans-serif;font-size:18.5px;color:#444;">how she sees her mother’s life and what her last words really meant for Eveline;</div>
<div class="t" style="left:279.0px;top:1497.44px;font-family:'Liberation Sans',sans-serif;font-size:15px;color:#111;font-weight:bold;">K</div>
<div class="t" style="left:302.3px;top:1496.23px;font-family:'Liberation Sans',sans-serif;font-size:18.5px;color:#444;transform-origin:0 0;transform:scaleX(1.0090);">what Eveline is caught between throughout this part;</div>
<div class="t" style="left:279.0px;top:1522.10px;font-family:'Liberation Sans',sans-serif;font-size:15px;color:#111;font-weight:bold;">L</div>
<div class="t" style="left:302.3px;top:1520.89px;font-family:'Liberation Sans',sans-serif;font-size:18.5px;color:#444;transform-origin:0 0;transform:scaleX(0.9952);">what the girl experiences and what she perceives as her fate if she remains in Ireland;</div>
<div class="t" style="left:279.0px;top:1546.76px;font-family:'Liberation Sans',sans-serif;font-size:15px;color:#111;font-weight:bold;">M</div>
<div class="t" style="left:302.3px;top:1545.55px;font-family:'Liberation Sans',sans-serif;font-size:18.5px;color:#444;transform-origin:0 0;transform:scaleX(0.9849);">what Frank represents to her.</div>
<div class="t" style="left:1044.6px;top:1090.74px;font-family:'Liberation Sans',sans-serif;font-size:19.5px;color:#0a4f9e;font-weight:bold;letter-spacing:0.6px;-webkit-text-stroke:0.6px #0a4f9e;">ANALYSIS (I)</div>
<div class="t" style="left:1044.6px;top:1122.34px;font-family:'Liberation Sans',sans-serif;font-size:25px;color:#0a4f9e;-webkit-text-stroke:0.5px #0a4f9e;">3</div>
<div class="t" style="left:1084.6px;top:1124.59px;font-family:'Liberation Sans',sans-serif;font-size:18.5px;color:#111;font-weight:bold;transform-origin:0 0;transform:scaleX(0.9521);"><span class="k">FOCUS</span> on lines 93–111.</div>
<div class="t" style="left:1084.6px;top:1149.19px;font-family:'Liberation Sans',sans-serif;font-size:18.5px;color:#111;font-weight:bold;transform-origin:0 0;transform:scaleX(0.9416);">The access to the character’s</div>
<div class="t" style="left:1084.6px;top:1173.79px;font-family:'Liberation Sans',sans-serif;font-size:18.5px;color:#111;font-weight:bold;transform-origin:0 0;transform:scaleX(0.9340);">consciousness is provided by</div>
<div class="t" style="left:1084.6px;top:1198.39px;font-family:'Liberation Sans',sans-serif;font-size:18.5px;color:#111;font-weight:bold;transform-origin:0 0;transform:scaleX(0.9408);">Joyce through the technique</div>
<div class="t" style="left:1084.6px;top:1222.99px;font-family:'Liberation Sans',sans-serif;font-size:18.5px;color:#111;font-weight:bold;transform-origin:0 0;transform:scaleX(0.9701);">of ‘epiphany’, that is, ‘the</div>
<div class="t" style="left:1084.6px;top:1247.59px;font-family:'Liberation Sans',sans-serif;font-size:18.5px;color:#111;font-weight:bold;transform-origin:0 0;transform:scaleX(0.9576);">sudden revelation of a hidden</div>
<div class="t" style="left:1084.6px;top:1272.19px;font-family:'Liberation Sans',sans-serif;font-size:18.5px;color:#111;font-weight:bold;transform-origin:0 0;transform:scaleX(0.9547);">reality’ through ‘casual words</div>
<div class="t" style="left:1084.6px;top:1296.79px;font-family:'Liberation Sans',sans-serif;font-size:18.5px;color:#111;font-weight:bold;transform-origin:0 0;transform:scaleX(0.9455);">or events’.</div>
<div class="t" style="left:1084.6px;top:1321.39px;font-family:'Liberation Sans',sans-serif;font-size:18.5px;color:#111;font-weight:bold;">1</div>
<div class="t" style="left:1108.0px;top:1321.39px;font-family:'Liberation Sans',sans-serif;font-size:18.5px;color:#444;transform-origin:0 0;transform:scaleX(0.9932);">Explain what revelation the</div>
<div class="t" style="left:1108.0px;top:1345.99px;font-family:'Liberation Sans',sans-serif;font-size:18.5px;color:#444;transform-origin:0 0;transform:scaleX(0.9864);">girl has.</div>
<div class="t" style="left:1084.6px;top:1370.59px;font-family:'Liberation Sans',sans-serif;font-size:18.5px;color:#111;font-weight:bold;">2</div>
<div class="t" style="left:1108.0px;top:1370.59px;font-family:'Liberation Sans',sans-serif;font-size:18.5px;color:#444;">The miserable life of</div>
<div class="t" style="left:1108.0px;top:1395.19px;font-family:'Liberation Sans',sans-serif;font-size:18.5px;color:#444;transform-origin:0 0;transform:scaleX(0.9942);">Eveline’s mother has</div>
<div class="t" style="left:1108.0px;top:1419.79px;font-family:'Liberation Sans',sans-serif;font-size:18.5px;color:#444;">influenced her decisions.</div>
<div class="t" style="left:1108.0px;top:1444.39px;font-family:'Liberation Sans',sans-serif;font-size:18.5px;color:#444;transform-origin:0 0;transform:scaleX(1.0041);">Sum up the different phases</div>
<div class="t" style="left:1108.0px;top:1468.99px;font-family:'Liberation Sans',sans-serif;font-size:18.5px;color:#444;transform-origin:0 0;transform:scaleX(1.0239);">of the girl’s decisions up to</div>
<div class="t" style="left:1108.0px;top:1493.59px;font-family:'Liberation Sans',sans-serif;font-size:18.5px;color:#444;">the final failure.</div>
<div class="t" style="left:1540.3px;top:845.24px;font-family:'Liberation Sans',sans-serif;font-size:19.5px;color:#0a4f9e;font-weight:bold;letter-spacing:0.6px;-webkit-text-stroke:0.6px #0a4f9e;transform-origin:0 0;transform:scaleX(0.9870);">COMPREHENSION (II)</div>
<div class="t" style="left:1540.0px;top:876.64px;font-family:'Liberation Sans',sans-serif;font-size:25px;color:#0a4f9e;-webkit-text-stroke:0.5px #0a4f9e;">4</div>
<div class="t" style="left:1581.6px;top:878.89px;font-family:'Liberation Sans',sans-serif;font-size:18.5px;color:#111;font-weight:bold;transform-origin:0 0;transform:scaleX(0.9199);"><span class="k">READ</span> up to the end of the story</div>
<div class="t" style="left:1581.6px;top:903.59px;font-family:'Liberation Sans',sans-serif;font-size:18.5px;color:#111;font-weight:bold;transform-origin:0 0;transform:scaleX(0.9097);">and do the following activities.</div>
<div class="t" style="left:1581.6px;top:928.49px;font-family:'Liberation Sans',sans-serif;font-size:18.5px;color:#111;font-weight:bold;">1</div>
<div class="t" style="left:1605.0px;top:928.49px;font-family:'Liberation Sans',sans-serif;font-size:18.5px;color:#444;transform-origin:0 0;transform:scaleX(0.9544);">Write a heading for this section.</div>
<div class="t" style="left:1581.6px;top:953.15px;font-family:'Liberation Sans',sans-serif;font-size:18.5px;color:#111;font-weight:bold;">2</div>
<div class="t" style="left:1605.0px;top:953.15px;font-family:'Liberation Sans',sans-serif;font-size:18.5px;color:#444;transform-origin:0 0;transform:scaleX(0.9585);">Now answer the questions.</div>
<div class="t" style="left:1604.8px;top:979.02px;font-family:'Liberation Sans',sans-serif;font-size:15px;color:#111;font-weight:bold;">A</div>
<div class="t" style="left:1628.3px;top:977.81px;font-family:'Liberation Sans',sans-serif;font-size:18.5px;color:#444;transform-origin:0 0;transform:scaleX(0.9088);">Where is Eveline?</div>
<div class="t" style="left:1604.8px;top:1003.68px;font-family:'Liberation Sans',sans-serif;font-size:15px;color:#111;font-weight:bold;">B</div>
<div class="t" style="left:1628.3px;top:1002.47px;font-family:'Liberation Sans',sans-serif;font-size:18.5px;color:#444;transform-origin:0 0;transform:scaleX(0.9503);">Who surrounds her?</div>
<div class="t" style="left:1604.8px;top:1028.34px;font-family:'Liberation Sans',sans-serif;font-size:15px;color:#111;font-weight:bold;">C</div>
<div class="t" style="left:1628.3px;top:1027.13px;font-family:'Liberation Sans',sans-serif;font-size:18.5px;color:#444;transform-origin:0 0;transform:scaleX(0.9480);">What happens when she is</div>
<div class="t" style="left:1628.3px;top:1051.79px;font-family:'Liberation Sans',sans-serif;font-size:18.5px;color:#444;transform-origin:0 0;transform:scaleX(0.9268);">on the quayside?</div>
<div class="t" style="left:1604.8px;top:1077.66px;font-family:'Liberation Sans',sans-serif;font-size:15px;color:#111;font-weight:bold;">D</div>
<div class="t" style="left:1628.3px;top:1076.45px;font-family:'Liberation Sans',sans-serif;font-size:18.5px;color:#444;transform-origin:0 0;transform:scaleX(0.9691);">How does her relationship</div>
<div class="t" style="left:1628.3px;top:1101.11px;font-family:'Liberation Sans',sans-serif;font-size:18.5px;color:#444;transform-origin:0 0;transform:scaleX(0.9534);">with Frank turn out to be?</div>
<div class="t" style="left:1604.8px;top:1126.98px;font-family:'Liberation Sans',sans-serif;font-size:15px;color:#111;font-weight:bold;">E</div>
<div class="t" style="left:1628.3px;top:1125.77px;font-family:'Liberation Sans',sans-serif;font-size:18.5px;color:#444;transform-origin:0 0;transform:scaleX(0.9524);">What does she understand</div>
<div class="t" style="left:1628.3px;top:1150.43px;font-family:'Liberation Sans',sans-serif;font-size:18.5px;color:#444;transform-origin:0 0;transform:scaleX(0.9566);">about her affections for her</div>
<div class="t" style="left:1628.3px;top:1175.09px;font-family:'Liberation Sans',sans-serif;font-size:18.5px;color:#444;transform-origin:0 0;transform:scaleX(0.9593);">family and surroundings?</div>
<div class="t" style="left:1604.8px;top:1200.96px;font-family:'Liberation Sans',sans-serif;font-size:15px;color:#111;font-weight:bold;">F</div>
<div class="t" style="left:1628.3px;top:1199.75px;font-family:'Liberation Sans',sans-serif;font-size:18.5px;color:#444;transform-origin:0 0;transform:scaleX(0.9539);">What is the effect produced</div>
<div class="t" style="left:1628.3px;top:1224.41px;font-family:'Liberation Sans',sans-serif;font-size:18.5px;color:#444;transform-origin:0 0;transform:scaleX(0.9503);">by the last words of the</div>
<div class="t" style="left:1628.3px;top:1249.07px;font-family:'Liberation Sans',sans-serif;font-size:18.5px;color:#444;transform-origin:0 0;transform:scaleX(0.9200);">story?</div>
<div class="t" style="left:1540.2px;top:1321.94px;font-family:'Liberation Sans',sans-serif;font-size:19.5px;color:#0a4f9e;font-weight:bold;letter-spacing:0.6px;-webkit-text-stroke:0.6px #0a4f9e;">ANALYSIS (II)</div>
<div class="t" style="left:1540.0px;top:1353.84px;font-family:'Liberation Sans',sans-serif;font-size:25px;color:#0a4f9e;-webkit-text-stroke:0.5px #0a4f9e;">5</div>
<div class="t" style="left:1581.0px;top:1356.09px;font-family:'Liberation Sans',sans-serif;font-size:18.5px;color:#111;font-weight:bold;transform-origin:0 0;transform:scaleX(0.9848);"><span class="k">CONCENTRATE</span> on the</div>
<div class="t" style="left:1581.0px;top:1381.59px;font-family:'Liberation Sans',sans-serif;font-size:18.5px;color:#111;font-weight:bold;transform-origin:0 0;transform:scaleX(0.9712);">narrator. Note down:</div>
<div class="t" style="left:1581.0px;top:1405.89px;font-family:'Liberation Sans',sans-serif;font-size:18.5px;color:#111;font-weight:bold;">1</div>
<div class="t" style="left:1604.8px;top:1405.89px;font-family:'Liberation Sans',sans-serif;font-size:18.5px;color:#444;transform-origin:0 0;transform:scaleX(1.0190);">what kind of narrator it is;</div>
<div class="t" style="left:1581.0px;top:1430.29px;font-family:'Liberation Sans',sans-serif;font-size:18.5px;color:#111;font-weight:bold;">2</div>
<div class="t" style="left:1604.8px;top:1430.29px;font-family:'Liberation Sans',sans-serif;font-size:18.5px;color:#444;transform-origin:0 0;transform:scaleX(1.0058);">whose point of view is</div>
<div class="t" style="left:1604.8px;top:1454.69px;font-family:'Liberation Sans',sans-serif;font-size:18.5px;color:#444;transform-origin:0 0;transform:scaleX(0.9845);">adopted;</div>
<div class="t" style="left:1581.0px;top:1479.09px;font-family:'Liberation Sans',sans-serif;font-size:18.5px;color:#111;font-weight:bold;">3</div>
<div class="t" style="left:1604.8px;top:1479.09px;font-family:'Liberation Sans',sans-serif;font-size:18.5px;color:#444;">what technique is employed</div>
<div class="t" style="left:1604.8px;top:1503.49px;font-family:'Liberation Sans',sans-serif;font-size:18.5px;color:#444;transform-origin:0 0;transform:scaleX(0.9889);">to give voice to Eveline’s</div>
<div class="t" style="left:1604.8px;top:1527.89px;font-family:'Liberation Sans',sans-serif;font-size:18.5px;color:#444;transform-origin:0 0;transform:scaleX(1.0089);">thoughts.</div>
<div class="t" style="left:1894.7px;top:848.64px;font-family:'Liberation Sans',sans-serif;font-size:25px;color:#0a4f9e;-webkit-text-stroke:0.5px #0a4f9e;">6</div>
<div class="t" style="left:1936.4px;top:850.89px;font-family:'Liberation Sans',sans-serif;font-size:18.5px;color:#111;font-weight:bold;transform-origin:0 0;transform:scaleX(0.9557);"><span class="k">FOCUS</span> on the character of Eveline.</div>
<div class="t" style="left:1936.4px;top:876.89px;font-family:'Liberation Sans',sans-serif;font-size:18.5px;color:#111;font-weight:bold;">1</div>
<div class="t" style="left:1959.6px;top:876.89px;font-family:'Liberation Sans',sans-serif;font-size:18.5px;color:#444;transform-origin:0 0;transform:scaleX(0.9936);">Does Joyce introduce her in a traditional way? What is the reader obliged to do?</div>
<div class="t" style="left:1936.4px;top:901.19px;font-family:'Liberation Sans',sans-serif;font-size:18.5px;color:#111;font-weight:bold;">2</div>
<div class="t" style="left:1959.6px;top:901.19px;font-family:'Liberation Sans',sans-serif;font-size:18.5px;color:#444;transform-origin:0 0;transform:scaleX(0.9740);">How does she appear? Why?</div>
<div class="t" style="left:1936.4px;top:925.49px;font-family:'Liberation Sans',sans-serif;font-size:18.5px;color:#111;font-weight:bold;">3</div>
<div class="t" style="left:1959.6px;top:925.49px;font-family:'Liberation Sans',sans-serif;font-size:18.5px;color:#444;transform-origin:0 0;transform:scaleX(1.0061);">Most of the story takes place in Eveline’s mind; however, her thoughts are not</div>
<div class="t" style="left:1959.6px;top:950.49px;font-family:'Liberation Sans',sans-serif;font-size:18.5px;color:#444;transform-origin:0 0;transform:scaleX(1.0126);">arranged in chronological order and they wander from past to present and future. Fill</div>
<div class="t" style="left:1959.6px;top:974.79px;font-family:'Liberation Sans',sans-serif;font-size:18.5px;color:#444;transform-origin:0 0;transform:scaleX(1.0290);">in the table below with her most important thoughts.</div>
<div class="t" style="left:2061.0px;top:1014.59px;font-family:'Liberation Sans',sans-serif;font-size:18.5px;color:#222;transform:translateX(-50%)">Past</div>
<div class="t" style="left:2308.8px;top:1014.59px;font-family:'Liberation Sans',sans-serif;font-size:18.5px;color:#222;transform:translateX(-50%)">Present</div>
<div class="t" style="left:2556.6px;top:1014.59px;font-family:'Liberation Sans',sans-serif;font-size:18.5px;color:#222;transform:translateX(-50%)">Future</div>
<div class="t" style="left:1936.4px;top:1071.29px;font-family:'Liberation Sans',sans-serif;font-size:18.5px;color:#111;font-weight:bold;">4</div>
<div class="t" style="left:1959.6px;top:1071.29px;font-family:'Liberation Sans',sans-serif;font-size:18.5px;color:#444;transform-origin:0 0;transform:scaleX(1.0155);">Point out the most important images connected with these time references.</div>
<div class="t" style="left:1936.4px;top:1095.59px;font-family:'Liberation Sans',sans-serif;font-size:18.5px;color:#111;font-weight:bold;">5</div>
<div class="t" style="left:1959.6px;top:1095.59px;font-family:'Liberation Sans',sans-serif;font-size:18.5px;color:#444;transform-origin:0 0;transform:scaleX(1.0053);">A simile is used in line 130 to describe Eveline. Identify it. What does it add to the</div>
<div class="t" style="left:1959.6px;top:1119.89px;font-family:'Liberation Sans',sans-serif;font-size:18.5px;color:#444;transform-origin:0 0;transform:scaleX(0.9933);">description of her character?</div>
<div class="t" style="left:1894.7px;top:1169.64px;font-family:'Liberation Sans',sans-serif;font-size:25px;color:#0a4f9e;-webkit-text-stroke:0.5px #0a4f9e;">7</div>
<div class="t" style="left:1936.4px;top:1171.89px;font-family:'Liberation Sans',sans-serif;font-size:18.5px;color:#111;font-weight:bold;transform-origin:0 0;transform:scaleX(0.9630);"><span class="k">DISCUSS.</span> ‘Eveline’ is a story of paralysis. Has this state of mind been determined</div>
<div class="t" style="left:1936.4px;top:1196.89px;font-family:'Liberation Sans',sans-serif;font-size:18.5px;color:#111;font-weight:bold;transform-origin:0 0;transform:scaleX(0.9523);">by her conflict between love and duty or familiar boredom and a courageous break?</div>
<div class="t" style="left:2082.0px;top:1279.35px;font-family:'Liberation Sans',sans-serif;font-size:29px;color:#e20a17;font-weight:bold;transform-origin:0 0;transform:scaleX(0.9583);">Terza Prova</div>
<div class="t" style="left:1894.7px;top:1315.34px;font-family:'Liberation Sans',sans-serif;font-size:25px;color:#e20a17;-webkit-text-stroke:0.5px #e20a17;">8</div>
<div class="t" style="left:1936.4px;top:1317.59px;font-family:'Liberation Sans',sans-serif;font-size:18.5px;color:#111;font-weight:bold;transform-origin:0 0;transform:scaleX(0.9675);"><span class="k">TYPE B.</span> In not more than ten to twelve lines, clarify the most important stylistic</div>
<div class="t" style="left:1936.4px;top:1342.59px;font-family:'Liberation Sans',sans-serif;font-size:18.5px;color:#111;font-weight:bold;transform-origin:0 0;transform:scaleX(0.9559);">devices and the themes of <i>Dubliners</i> present in ‘Eveline’.</div>
<div class="t" style="left:1974.5px;top:1392.39px;font-family:'Liberation Sans',sans-serif;font-size:18.5px;color:#444;transform-origin:0 0;transform:scaleX(0.9770);">Exam Reference pag. 355</div>
<div class="t" style="left:1982.2px;top:1469.04px;font-family:'Liberation Sans',sans-serif;font-size:19.5px;color:#0a4f9e;font-weight:bold;letter-spacing:0.6px;-webkit-text-stroke:0.6px #0a4f9e;transform-origin:0 0;transform:scaleX(0.9866);">YOUR TURN</div>
<div class="t" style="left:1982.0px;top:1501.14px;font-family:'Liberation Sans',sans-serif;font-size:25px;color:#0a4f9e;-webkit-text-stroke:0.5px #0a4f9e;">9</div>
<div class="t" style="left:2011.7px;top:1503.39px;font-family:'Liberation Sans',sans-serif;font-size:18.5px;color:#111;font-weight:bold;transform-origin:0 0;transform:scaleX(0.9627);"><span class="k">DISCUSS</span> with the rest of the class. Does ‘Eveline’ still exist in our</div>
<div class="t" style="left:1982.2px;top:1527.59px;font-family:'Liberation Sans',sans-serif;font-size:18.5px;color:#111;font-weight:bold;transform-origin:0 0;transform:scaleX(0.9308);">contemporary society?</div>
<svg style="position:absolute;left:129.2px;top:1110px" width="58.5" height="60" viewBox="0 0 58 60" preserveAspectRatio="none"><rect x="0" y="0" width="58" height="60" rx="10" fill="#ad1c22"/><path d="M14 40.5 L28.3 16.6 L37 21.8 L22.6 45.8 Z" fill="#fff"/><path d="M28.9 15.6 L33.2 7.6 L41.8 12.8 L38.3 21 Z" fill="#fff"/><path d="M36.5 6.8 L38.2 4.6 L42.6 7.4 L41.2 9.6 Z" fill="#fff"/><path d="M44.6 14.6 L34.2 30.8" stroke="#fff" stroke-width="1.3"/><path d="M13.6 42.6 L20.6 46.8 L10.6 54.2 Z" fill="#fff"/><path d="M18.6 53.6 C22 50.5 25.5 50 30 51 C36 52.6 40 54.4 49 49.6" fill="none" stroke="#fff" stroke-width="1.8" stroke-linecap="round"/></svg><svg style="position:absolute;left:1006.4px;top:1136.8px" width="58.5" height="60" viewBox="0 0 58 60" preserveAspectRatio="none"><rect x="0" y="0" width="58" height="60" rx="10" fill="#ad1c22"/><path d="M14 40.5 L28.3 16.6 L37 21.8 L22.6 45.8 Z" fill="#fff"/><path d="M28.9 15.6 L33.2 7.6 L41.8 12.8 L38.3 21 Z" fill="#fff"/><path d="M36.5 6.8 L38.2 4.6 L42.6 7.4 L41.2 9.6 Z" fill="#fff"/><path d="M44.6 14.6 L34.2 30.8" stroke="#fff" stroke-width="1.3"/><path d="M13.6 42.6 L20.6 46.8 L10.6 54.2 Z" fill="#fff"/><path d="M18.6 53.6 C22 50.5 25.5 50 30 51 C36 52.6 40 54.4 49 49.6" fill="none" stroke="#fff" stroke-width="1.8" stroke-linecap="round"/></svg><svg style="position:absolute;left:1521.5px;top:888.6px" width="58.5" height="60" viewBox="0 0 58 60" preserveAspectRatio="none"><rect x="0" y="0" width="58" height="60" rx="10" fill="#ad1c22"/><path d="M14 40.5 L28.3 16.6 L37 21.8 L22.6 45.8 Z" fill="#fff"/><path d="M28.9 15.6 L33.2 7.6 L41.8 12.8 L38.3 21 Z" fill="#fff"/><path d="M36.5 6.8 L38.2 4.6 L42.6 7.4 L41.2 9.6 Z" fill="#fff"/><path d="M44.6 14.6 L34.2 30.8" stroke="#fff" stroke-width="1.3"/><path d="M13.6 42.6 L20.6 46.8 L10.6 54.2 Z" fill="#fff"/><path d="M18.6 53.6 C22 50.5 25.5 50 30 51 C36 52.6 40 54.4 49 49.6" fill="none" stroke="#fff" stroke-width="1.8" stroke-linecap="round"/></svg><svg style="position:absolute;left:1521px;top:1369px" width="58.5" height="60" viewBox="0 0 58 60" preserveAspectRatio="none"><rect x="0" y="0" width="58" height="60" rx="10" fill="#ad1c22"/><path d="M14 40.5 L28.3 16.6 L37 21.8 L22.6 45.8 Z" fill="#fff"/><path d="M28.9 15.6 L33.2 7.6 L41.8 12.8 L38.3 21 Z" fill="#fff"/><path d="M36.5 6.8 L38.2 4.6 L42.6 7.4 L41.2 9.6 Z" fill="#fff"/><path d="M44.6 14.6 L34.2 30.8" stroke="#fff" stroke-width="1.3"/><path d="M13.6 42.6 L20.6 46.8 L10.6 54.2 Z" fill="#fff"/><path d="M18.6 53.6 C22 50.5 25.5 50 30 51 C36 52.6 40 54.4 49 49.6" fill="none" stroke="#fff" stroke-width="1.8" stroke-linecap="round"/></svg><svg style="position:absolute;left:1872.2px;top:873px" width="58.5" height="60" viewBox="0 0 58 60" preserveAspectRatio="none"><rect x="0" y="0" width="58" height="60" rx="10" fill="#ad1c22"/><path d="M14 40.5 L28.3 16.6 L37 21.8 L22.6 45.8 Z" fill="#fff"/><path d="M28.9 15.6 L33.2 7.6 L41.8 12.8 L38.3 21 Z" fill="#fff"/><path d="M36.5 6.8 L38.2 4.6 L42.6 7.4 L41.2 9.6 Z" fill="#fff"/><path d="M44.6 14.6 L34.2 30.8" stroke="#fff" stroke-width="1.3"/><path d="M13.6 42.6 L20.6 46.8 L10.6 54.2 Z" fill="#fff"/><path d="M18.6 53.6 C22 50.5 25.5 50 30 51 C36 52.6 40 54.4 49 49.6" fill="none" stroke="#fff" stroke-width="1.8" stroke-linecap="round"/></svg><svg style="position:absolute;left:1872.2px;top:1183.6px" width="58.5" height="60" viewBox="0 0 58 60" preserveAspectRatio="none"><rect x="0" y="0" width="58" height="60" rx="10" fill="#ad1c22"/><path d="M14 40.5 L28.3 16.6 L37 21.8 L22.6 45.8 Z" fill="#fff"/><path d="M28.9 15.6 L33.2 7.6 L41.8 12.8 L38.3 21 Z" fill="#fff"/><path d="M36.5 6.8 L38.2 4.6 L42.6 7.4 L41.2 9.6 Z" fill="#fff"/><path d="M44.6 14.6 L34.2 30.8" stroke="#fff" stroke-width="1.3"/><path d="M13.6 42.6 L20.6 46.8 L10.6 54.2 Z" fill="#fff"/><path d="M18.6 53.6 C22 50.5 25.5 50 30 51 C36 52.6 40 54.4 49 49.6" fill="none" stroke="#fff" stroke-width="1.8" stroke-linecap="round"/></svg>
</body></html>
